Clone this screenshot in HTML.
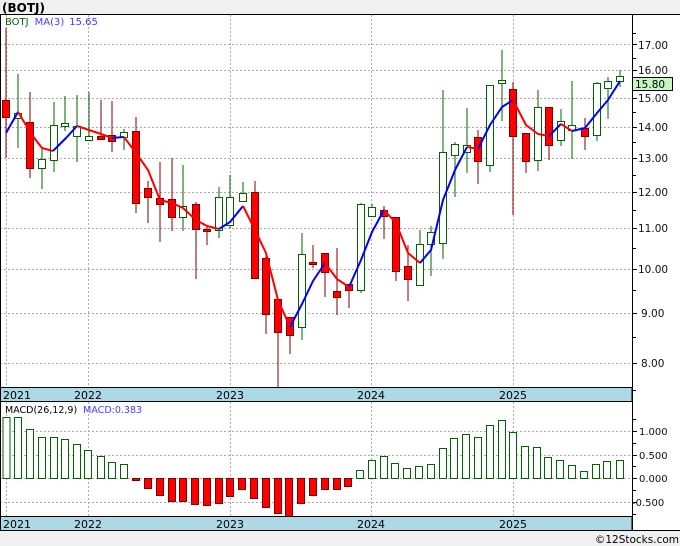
<!DOCTYPE html>
<html><head><meta charset="utf-8"><style>
html,body{margin:0;padding:0;background:#f0f0f0;}
svg{display:block;font-family:"DejaVu Sans","Liberation Sans",sans-serif;}
</style></head><body>
<svg width="680" height="546" viewBox="0 0 680 546" xmlns="http://www.w3.org/2000/svg">
<rect x="0" y="0" width="680" height="546" fill="#f0f0f0"/>
<text x="2" y="12" font-size="12" font-weight="bold" fill="#000">(BOTJ)</text>
<rect x="0" y="14" width="680" height="516" fill="#fff"/>
<line x1="0" y1="14.5" x2="680" y2="14.5" stroke="#000"/>
<g stroke="#aaa" stroke-dasharray="2,2" stroke-width="1">
<line x1="0" y1="44.5" x2="632" y2="44.5"/><line x1="0" y1="70.5" x2="632" y2="70.5"/>
<line x1="0" y1="98.5" x2="632" y2="98.5"/><line x1="0" y1="127.5" x2="632" y2="127.5"/>
<line x1="0" y1="158.5" x2="632" y2="158.5"/><line x1="0" y1="192.5" x2="632" y2="192.5"/>
<line x1="0" y1="228.5" x2="632" y2="228.5"/><line x1="0" y1="269.5" x2="632" y2="269.5"/>
<line x1="0" y1="313.5" x2="632" y2="313.5"/><line x1="0" y1="363.5" x2="632" y2="363.5"/>
<line x1="6.5" y1="15" x2="6.5" y2="388"/><line x1="88.5" y1="15" x2="88.5" y2="388"/>
<line x1="230.5" y1="15" x2="230.5" y2="388"/><line x1="371.5" y1="15" x2="371.5" y2="388"/>
<line x1="513.5" y1="15" x2="513.5" y2="388"/>
<line x1="0" y1="431.5" x2="632" y2="431.5"/><line x1="0" y1="455.5" x2="632" y2="455.5"/>
<line x1="0" y1="478.5" x2="632" y2="478.5"/><line x1="0" y1="502.5" x2="632" y2="502.5"/>
<line x1="6.5" y1="402" x2="6.5" y2="516"/><line x1="88.5" y1="402" x2="88.5" y2="516"/>
<line x1="230.5" y1="402" x2="230.5" y2="516"/><line x1="371.5" y1="402" x2="371.5" y2="516"/>
<line x1="513.5" y1="402" x2="513.5" y2="516"/>
</g>
<text x="5" y="25" font-size="10"><tspan fill="#006400">BOTJ</tspan><tspan fill="#4040ff" dx="6">MA(3)</tspan><tspan fill="#4040ff" dx="5">15.65</tspan></text>
<g stroke-width="1">
<line x1="6" y1="28" x2="6" y2="158" stroke="#800000"/><rect x="2.5" y="100.5" width="7" height="17" fill="#f00" stroke="#800000"/>
<line x1="18" y1="74" x2="18" y2="148" stroke="#006400"/><rect x="14.5" y="113.5" width="7" height="5" fill="#fff" stroke="#006400"/>
<line x1="30" y1="92" x2="30" y2="178" stroke="#800000"/><rect x="26.5" y="122.5" width="7" height="46" fill="#f00" stroke="#800000"/>
<line x1="42" y1="148" x2="42" y2="189" stroke="#006400"/><rect x="38.5" y="159.5" width="7" height="9" fill="#fff" stroke="#006400"/>
<line x1="54" y1="102" x2="54" y2="172" stroke="#006400"/><rect x="50.5" y="125.5" width="7" height="35" fill="#fff" stroke="#006400"/>
<line x1="65" y1="96" x2="65" y2="131" stroke="#006400"/><rect x="61.5" y="123.5" width="7" height="3" fill="#fff" stroke="#006400"/>
<line x1="77" y1="95" x2="77" y2="162" stroke="#006400"/><rect x="73.5" y="126.5" width="7" height="10" fill="#fff" stroke="#006400"/>
<line x1="89" y1="92" x2="89" y2="140" stroke="#006400"/><rect x="85.5" y="136.5" width="7" height="4" fill="#fff" stroke="#006400"/>
<line x1="101" y1="100" x2="101" y2="138" stroke="#800000"/><rect x="97.5" y="136.5" width="7" height="3" fill="#f00" stroke="#800000"/>
<line x1="112" y1="101" x2="112" y2="152" stroke="#800000"/><rect x="108.5" y="135.5" width="7" height="6" fill="#f00" stroke="#800000"/>
<line x1="124" y1="129" x2="124" y2="150" stroke="#006400"/><rect x="120.5" y="132.5" width="7" height="5" fill="#fff" stroke="#006400"/>
<line x1="136" y1="117" x2="136" y2="213" stroke="#800000"/><rect x="132.5" y="131.5" width="7" height="72" fill="#f00" stroke="#800000"/>
<line x1="148" y1="181" x2="148" y2="223" stroke="#800000"/><rect x="144.5" y="188.5" width="7" height="9" fill="#f00" stroke="#800000"/>
<line x1="160" y1="162" x2="160" y2="242" stroke="#800000"/><rect x="156.5" y="198.5" width="7" height="6" fill="#f00" stroke="#800000"/>
<line x1="172" y1="158" x2="172" y2="231" stroke="#800000"/><rect x="168.5" y="199.5" width="7" height="18" fill="#f00" stroke="#800000"/>
<line x1="183" y1="165" x2="183" y2="231" stroke="#006400"/><rect x="179.5" y="206.5" width="7" height="11" fill="#fff" stroke="#006400"/>
<line x1="196" y1="202" x2="196" y2="279" stroke="#800000"/><rect x="192.5" y="204.5" width="7" height="25" fill="#f00" stroke="#800000"/>
<line x1="207" y1="225" x2="207" y2="245" stroke="#800000"/><rect x="203.5" y="229.5" width="7" height="2" fill="#f00" stroke="#800000"/>
<line x1="219" y1="187" x2="219" y2="238" stroke="#006400"/><rect x="215.5" y="197.5" width="7" height="33" fill="#fff" stroke="#006400"/>
<line x1="230" y1="175" x2="230" y2="228" stroke="#006400"/><rect x="226.5" y="197.5" width="7" height="28" fill="#fff" stroke="#006400"/>
<line x1="243" y1="182" x2="243" y2="202" stroke="#006400"/><rect x="239.5" y="193.5" width="7" height="8" fill="#fff" stroke="#006400"/>
<line x1="255" y1="181" x2="255" y2="278" stroke="#800000"/><rect x="251.5" y="192.5" width="7" height="86" fill="#f00" stroke="#800000"/>
<line x1="266" y1="252" x2="266" y2="334" stroke="#800000"/><rect x="262.5" y="258.5" width="7" height="56" fill="#f00" stroke="#800000"/>
<line x1="278" y1="299" x2="278" y2="387" stroke="#800000"/><rect x="274.5" y="299.5" width="7" height="33" fill="#f00" stroke="#800000"/>
<line x1="290" y1="317" x2="290" y2="354" stroke="#800000"/><rect x="286.5" y="317.5" width="7" height="18" fill="#f00" stroke="#800000"/>
<line x1="302" y1="233" x2="302" y2="340" stroke="#006400"/><rect x="298.5" y="254.5" width="7" height="73" fill="#fff" stroke="#006400"/>
<line x1="313" y1="245" x2="313" y2="268" stroke="#800000"/><rect x="309.5" y="262.5" width="7" height="2" fill="#f00" stroke="#800000"/>
<line x1="325" y1="253" x2="325" y2="297" stroke="#800000"/><rect x="321.5" y="253.5" width="7" height="19" fill="#f00" stroke="#800000"/>
<line x1="337" y1="248" x2="337" y2="315" stroke="#800000"/><rect x="333.5" y="291.5" width="7" height="6" fill="#f00" stroke="#800000"/>
<line x1="349" y1="284" x2="349" y2="308" stroke="#800000"/><rect x="345.5" y="284.5" width="7" height="6" fill="#f00" stroke="#800000"/>
<line x1="361" y1="203" x2="361" y2="293" stroke="#006400"/><rect x="357.5" y="204.5" width="7" height="86" fill="#fff" stroke="#006400"/>
<line x1="372" y1="204" x2="372" y2="216" stroke="#006400"/><rect x="368.5" y="207.5" width="7" height="9" fill="#fff" stroke="#006400"/>
<line x1="384" y1="206" x2="384" y2="239" stroke="#800000"/><rect x="380.5" y="210.5" width="7" height="6" fill="#f00" stroke="#800000"/>
<line x1="396" y1="217" x2="396" y2="281" stroke="#800000"/><rect x="392.5" y="217.5" width="7" height="54" fill="#f00" stroke="#800000"/>
<line x1="408" y1="245" x2="408" y2="301" stroke="#800000"/><rect x="404.5" y="266.5" width="7" height="13" fill="#f00" stroke="#800000"/>
<line x1="420" y1="230" x2="420" y2="285" stroke="#006400"/><rect x="416.5" y="244.5" width="7" height="41" fill="#fff" stroke="#006400"/>
<line x1="431" y1="226" x2="431" y2="276" stroke="#006400"/><rect x="427.5" y="232.5" width="7" height="12" fill="#fff" stroke="#006400"/>
<line x1="443" y1="90" x2="443" y2="259" stroke="#006400"/><rect x="439.5" y="152.5" width="7" height="91" fill="#fff" stroke="#006400"/>
<line x1="455" y1="142" x2="455" y2="197" stroke="#006400"/><rect x="451.5" y="144.5" width="7" height="11" fill="#fff" stroke="#006400"/>
<line x1="467" y1="108" x2="467" y2="173" stroke="#006400"/><rect x="463.5" y="145.5" width="7" height="7" fill="#fff" stroke="#006400"/>
<line x1="478" y1="130" x2="478" y2="184" stroke="#800000"/><rect x="474.5" y="137.5" width="7" height="24" fill="#f00" stroke="#800000"/>
<line x1="490" y1="85" x2="490" y2="172" stroke="#006400"/><rect x="486.5" y="85.5" width="7" height="80" fill="#fff" stroke="#006400"/>
<line x1="502" y1="50" x2="502" y2="121" stroke="#006400"/><rect x="498.5" y="80.5" width="7" height="3" fill="#fff" stroke="#006400"/>
<line x1="513" y1="82" x2="513" y2="215" stroke="#800000"/><rect x="509.5" y="89.5" width="7" height="47" fill="#f00" stroke="#800000"/>
<line x1="526" y1="133" x2="526" y2="173" stroke="#800000"/><rect x="522.5" y="133.5" width="7" height="28" fill="#f00" stroke="#800000"/>
<line x1="538" y1="90" x2="538" y2="171" stroke="#006400"/><rect x="534.5" y="107.5" width="7" height="53" fill="#fff" stroke="#006400"/>
<line x1="549" y1="107" x2="549" y2="160" stroke="#800000"/><rect x="545.5" y="107.5" width="7" height="38" fill="#f00" stroke="#800000"/>
<line x1="561" y1="109" x2="561" y2="146" stroke="#006400"/><rect x="557.5" y="121.5" width="7" height="19" fill="#fff" stroke="#006400"/>
<line x1="572" y1="81" x2="572" y2="159" stroke="#006400"/><rect x="568.5" y="125.5" width="7" height="5" fill="#fff" stroke="#006400"/>
<line x1="585" y1="118" x2="585" y2="150" stroke="#800000"/><rect x="581.5" y="128.5" width="7" height="8" fill="#f00" stroke="#800000"/>
<line x1="597" y1="82" x2="597" y2="141" stroke="#006400"/><rect x="593.5" y="83.5" width="7" height="52" fill="#fff" stroke="#006400"/>
<line x1="608" y1="77" x2="608" y2="119" stroke="#006400"/><rect x="604.5" y="81.5" width="7" height="7" fill="#fff" stroke="#006400"/>
<line x1="620" y1="70" x2="620" y2="87" stroke="#006400"/><rect x="616.5" y="76.5" width="7" height="5" fill="#fff" stroke="#006400"/>
</g>
<g fill="none" stroke-width="2" stroke-linejoin="round">
<polyline stroke="#00f" points="6,133 18,112"/>
<polyline stroke="#f00" points="18,112 32,135 42,148 53,151"/>
<polyline stroke="#00f" points="53,151 66,138 77,126"/>
<polyline stroke="#f00" points="77,126 89,130 101,134 112,138"/>
<polyline stroke="#00f" points="112,138 124,137"/>
<polyline stroke="#f00" points="124,137 136,153 148,170 160,200 172,203 183,208 196,220 207,226 219,229"/>
<polyline stroke="#00f" points="219,229 230,222 243,206"/>
<polyline stroke="#f00" points="243,206 255,230 266,253 278,300 290,327"/>
<polyline stroke="#00f" points="290,327 302,304 313,281 325,263"/>
<polyline stroke="#f00" points="325,263 337,279 349,287"/>
<polyline stroke="#00f" points="349,287 361,260 372,232 384,210"/>
<polyline stroke="#f00" points="384,210 396,223 408,253 420,263"/>
<polyline stroke="#00f" points="420,263 431,250 443,200 455,170 467,147"/>
<polyline stroke="#f00" points="467,147 478,149"/>
<polyline stroke="#00f" points="478,149 490,125 502,107 513,100"/>
<polyline stroke="#f00" points="513,100 526,125 538,134 549,136"/>
<polyline stroke="#00f" points="549,136 561,124"/>
<polyline stroke="#f00" points="561,124 572,131"/>
<polyline stroke="#00f" points="572,131 585,128 597,113 608,100 620,81"/>
</g>
<g stroke-width="1">
<g fill="#fff" stroke="#006400">
<rect x="3" y="417.5" width="7" height="61"/><rect x="14.5" y="417.5" width="7" height="61"/>
<rect x="26.5" y="429.5" width="7" height="49"/><rect x="38.5" y="437.5" width="7" height="41"/>
<rect x="50.5" y="437.5" width="7" height="41"/><rect x="61.5" y="439.5" width="7" height="39"/>
<rect x="73.5" y="444.5" width="7" height="34"/><rect x="84.5" y="450.5" width="7" height="28"/>
<rect x="97.5" y="456.5" width="7" height="22"/><rect x="108.5" y="462.5" width="7" height="16"/>
<rect x="120.5" y="464.5" width="7" height="14"/>
<rect x="356.5" y="470.5" width="7" height="8"/><rect x="368.5" y="460.5" width="7" height="18"/>
<rect x="380.5" y="456.5" width="7" height="22"/><rect x="391.5" y="463.5" width="7" height="15"/>
<rect x="403.5" y="468.5" width="7" height="10"/><rect x="415.5" y="466.5" width="7" height="12"/>
<rect x="427.5" y="464.5" width="7" height="14"/><rect x="439.5" y="448.5" width="7" height="30"/>
<rect x="450.5" y="438.5" width="7" height="40"/><rect x="462.5" y="434.5" width="7" height="44"/>
<rect x="474.5" y="437.5" width="7" height="41"/><rect x="486.5" y="425.5" width="7" height="53"/>
<rect x="498.5" y="420.5" width="7" height="58"/><rect x="509.5" y="432.5" width="7" height="46"/>
<rect x="521.5" y="446.5" width="7" height="32"/><rect x="533.5" y="447.5" width="7" height="31"/>
<rect x="544.5" y="457.5" width="7" height="21"/><rect x="556.5" y="460.5" width="7" height="18"/>
<rect x="568.5" y="465.5" width="7" height="13"/><rect x="580.5" y="471.5" width="7" height="7"/>
<rect x="592.5" y="464.5" width="7" height="14"/><rect x="603.5" y="461.5" width="7" height="17"/>
<rect x="616.5" y="460.5" width="7" height="18"/>
</g>
<g fill="#f00" stroke="#800000">
<rect x="132.5" y="478.5" width="7" height="2"/><rect x="144.5" y="478.5" width="7" height="10"/>
<rect x="156.5" y="478.5" width="7" height="17"/><rect x="168.5" y="478.5" width="7" height="23"/>
<rect x="179.5" y="478.5" width="7" height="23"/><rect x="191.5" y="478.5" width="7" height="26"/>
<rect x="203.5" y="478.5" width="7" height="27"/><rect x="215.5" y="478.5" width="7" height="25"/>
<rect x="226.5" y="478.5" width="7" height="18"/><rect x="238.5" y="478.5" width="7" height="11"/>
<rect x="250.5" y="478.5" width="7" height="20"/><rect x="262.5" y="478.5" width="7" height="29"/>
<rect x="274.5" y="478.5" width="7" height="35"/><rect x="285.5" y="478.5" width="7" height="38"/>
<rect x="297.5" y="478.5" width="7" height="25"/><rect x="309.5" y="478.5" width="7" height="17"/>
<rect x="321.5" y="478.5" width="7" height="11"/><rect x="333.5" y="478.5" width="7" height="11"/>
<rect x="344.5" y="478.5" width="7" height="8"/>
</g>
</g>
<text x="5" y="413" font-size="9.5"><tspan fill="#000">MACD(26,12,9)</tspan><tspan fill="#4040ff" dx="6">MACD:0.383</tspan></text>
<rect x="0" y="387.5" width="632" height="14" fill="#add8e6" stroke="#000"/>
<rect x="0" y="516.5" width="632" height="14" fill="#add8e6" stroke="#000"/>
<g font-size="11" fill="#000">
<text x="3" y="399">2021</text><text x="74" y="399">2022</text><text x="216" y="399">2023</text><text x="357" y="399">2024</text><text x="499" y="399">2025</text>
<text x="3" y="528">2021</text><text x="74" y="528">2022</text><text x="216" y="528">2023</text><text x="357" y="528">2024</text><text x="499" y="528">2025</text>
</g>
<line x1="632.5" y1="14" x2="632.5" y2="531" stroke="#000"/>
<line x1="0.5" y1="14" x2="0.5" y2="531" stroke="#000"/>
<line x1="0" y1="530.5" x2="680" y2="530.5" stroke="#000"/>
<g stroke="#000">
<line x1="632" y1="44.5" x2="637" y2="44.5"/><line x1="632" y1="70.5" x2="637" y2="70.5"/><line x1="632" y1="98.5" x2="637" y2="98.5"/>
<line x1="632" y1="127.5" x2="637" y2="127.5"/><line x1="632" y1="158.5" x2="637" y2="158.5"/><line x1="632" y1="192.5" x2="637" y2="192.5"/>
<line x1="632" y1="228.5" x2="637" y2="228.5"/><line x1="632" y1="269.5" x2="637" y2="269.5"/><line x1="632" y1="313.5" x2="637" y2="313.5"/>
<line x1="632" y1="363.5" x2="637" y2="363.5"/>
<line x1="632" y1="33.5" x2="636" y2="33.5"/><line x1="632" y1="58.5" x2="636" y2="58.5"/><line x1="632" y1="84.5" x2="636" y2="84.5"/>
<line x1="632" y1="112.5" x2="636" y2="112.5"/><line x1="632" y1="142.5" x2="636" y2="142.5"/><line x1="632" y1="175.5" x2="636" y2="175.5"/>
<line x1="632" y1="210.5" x2="636" y2="210.5"/><line x1="632" y1="248.5" x2="636" y2="248.5"/><line x1="632" y1="290.5" x2="636" y2="290.5"/>
<line x1="632" y1="337.5" x2="636" y2="337.5"/><line x1="632" y1="390.5" x2="636" y2="390.5"/>
<line x1="632" y1="419.5" x2="636" y2="419.5"/><line x1="632" y1="431.5" x2="637" y2="431.5"/><line x1="632" y1="443.5" x2="636" y2="443.5"/>
<line x1="632" y1="455.5" x2="637" y2="455.5"/><line x1="632" y1="466.5" x2="636" y2="466.5"/><line x1="632" y1="478.5" x2="637" y2="478.5"/>
<line x1="632" y1="490.5" x2="636" y2="490.5"/><line x1="632" y1="502.5" x2="637" y2="502.5"/><line x1="632" y1="514.5" x2="636" y2="514.5"/>
</g>
<g font-size="10.5" fill="#111">
<text x="638" y="49">17.00</text><text x="638" y="74">16.00</text><text x="638" y="102">15.00</text>
<text x="638" y="131">14.00</text><text x="638" y="162">13.00</text><text x="638" y="196">12.00</text>
<text x="638" y="232">11.00</text><text x="638" y="273">10.00</text><text x="641" y="317">9.00</text><text x="641" y="367">8.00</text>
</g>
<g font-size="10" fill="#111">
<text x="639" y="435">1.000</text><text x="639" y="459">0.500</text><text x="639" y="482">0.000</text><text x="632" y="506">-0.500</text>
</g>
<rect x="632.5" y="77.5" width="40" height="13" fill="#c8f5c0" stroke="#000"/>
<text x="635" y="88" font-size="10.5" fill="#000">15.80</text>
<rect x="0" y="531" width="680" height="15" fill="#f0f0f0"/>
<text x="679" y="543" font-size="10.5" fill="#000" text-anchor="end">©12Stocks.com</text>
</svg>
</body></html>
